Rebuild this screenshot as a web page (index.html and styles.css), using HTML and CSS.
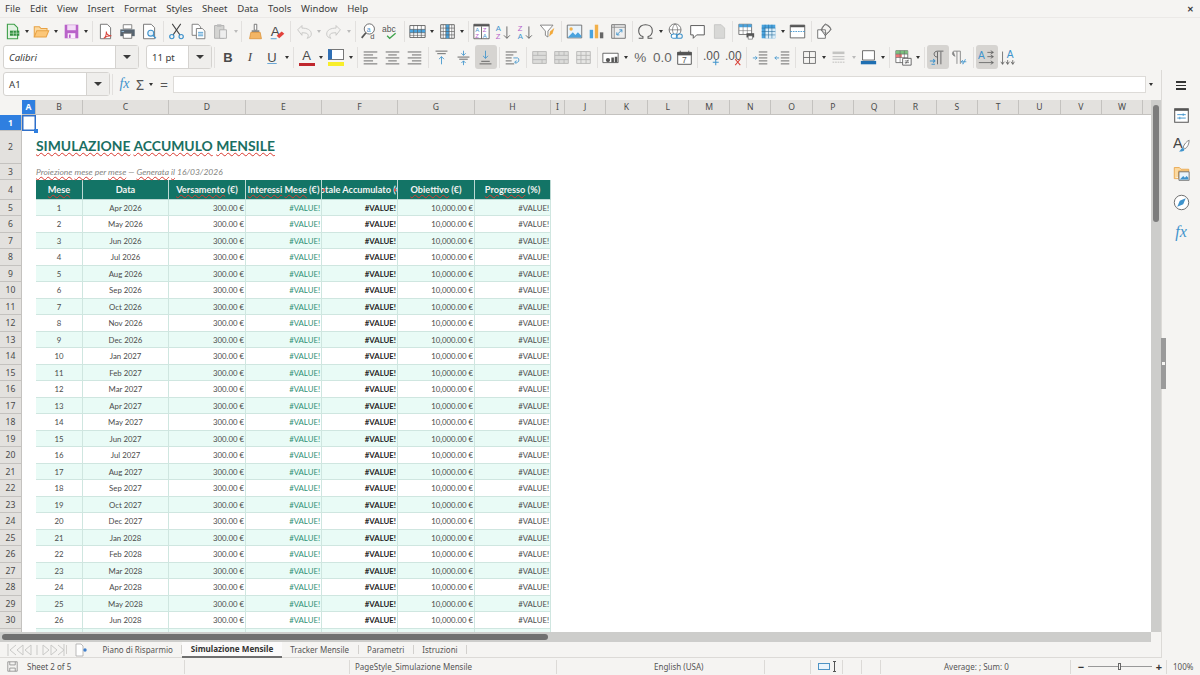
FILE: index.html
```html
<!DOCTYPE html>
<html lang="it">
<head>
    <meta charset="UTF-8">
    <title>Simulazione Mensile - Calc</title>
    <link rel="stylesheet" href="styles.css">
</head>
<body>
<svg class="defs" xmlns="http://www.w3.org/2000/svg">
    <symbol id="i-new" viewBox="0 0 20 20"><path d="M4 1.500h8l4 4v13H4z" fill="#e3f3e3" stroke="#3f9f4a" stroke-width="1.3"/><path d="M7 9h11v6H7z" fill="#2f8f3e"/><path d="M7 12h11M11 9v6M14.500 9v6" stroke="#d6efd6" stroke-width=".7"/></symbol>
    <symbol id="i-open" viewBox="0 0 20 20"><path d="M1.500 16.500v-12h6l2 2h7v3" fill="#fbd9a0" stroke="#e8a245" stroke-width="1.2"/><path d="M1.500 16.500l3-7.500h14l-3 7.500z" fill="#fcc779" stroke="#e8a245" stroke-width="1.2"/></symbol>
    <symbol id="i-save" viewBox="0 0 20 20"><path d="M2 2h16v16H2z" fill="#b963c9"/><path d="M5 2.500h10v6H5z" fill="#f3dcf7"/><path d="M5.500 12h9v6h-9z" fill="#fbeffc"/><path d="M7 13.500h2v4H7z" fill="#b963c9"/></symbol>
    <symbol id="i-pdf" viewBox="0 0 20 20"><path d="M4 1.500h8l4 4v13H4z" fill="#fff" stroke="#707070" stroke-width="1.1"/><path d="M8 18c2-1 3-5 3-8 0 3 2 5 6 5-3 0-7 1-9 3z" fill="none" stroke="#d8453c" stroke-width="1.2"/></symbol>
    <symbol id="i-print" viewBox="0 0 20 20"><path d="M5 2h10v5H5z" fill="#fff" stroke="#777"/><path d="M1.500 7.500h17v8h-17z" fill="#566470"/><path d="M5 12h10v6H5z" fill="#fff" stroke="#666"/><path d="M3 10h3" stroke="#9fc7e4"/></symbol>
    <symbol id="i-preview" viewBox="0 0 20 20"><path d="M3 1.500h9l4 4v13H3z" fill="#fff" stroke="#707070" stroke-width="1.1"/><circle cx="11.500" cy="12" r="3.500" fill="#e7f2fa" stroke="#3f93cc" stroke-width="1.300"/><path d="M14 14.500l3.500 3.500" stroke="#3f93cc" stroke-width="1.500"/></symbol>
    <symbol id="i-cut" viewBox="0 0 20 20"><path d="M5 1l9 13M15 1L6 14" stroke="#444" stroke-width="1.200" fill="none"/><circle cx="4.500" cy="16" r="2.500" fill="none" stroke="#3f93cc" stroke-width="1.400"/><circle cx="15.500" cy="16" r="2.500" fill="none" stroke="#3f93cc" stroke-width="1.400"/></symbol>
    <symbol id="i-copy" viewBox="0 0 20 20"><path d="M2.500 1.500h7l3 3v10h-10z" fill="#fff" stroke="#707070"/><path d="M7.500 6.500h7l3 3v9h-10z" fill="#fff" stroke="#707070"/><path d="M9.500 11h6M9.500 13h6M9.500 15h6" stroke="#3f93cc"/></symbol>
    <symbol id="i-paste" viewBox="0 0 20 20"><path d="M3 3h11v15H3z" fill="#d4d4d2" stroke="#aaa"/><path d="M6 1.500h5v3H6z" fill="#bbb"/><path d="M9 8h8v10H9z" fill="#eee" stroke="#aaa"/></symbol>
    <symbol id="i-clone" viewBox="0 0 20 20"><path d="M8.500 1.500h3v7h-3z" fill="#fff" stroke="#666"/><path d="M5.500 8.500h9v2.500h-9z" fill="#8a8a8a"/><path d="M4.500 11h11l1.500 7.500H3z" fill="#f3b565" stroke="#d98a2b" stroke-width=".8"/></symbol>
    <symbol id="i-clear" viewBox="0 0 20 20"><text x="2" y="15" class="gl" font-size="16" fill="#4a4a4a">A</text><path d="M9 15l6-5 3 2.500-6 5.500z" fill="#e2413b"/><path d="M2 18.500h7" stroke="#3f93cc"/></symbol>
    <symbol id="i-undo" viewBox="0 0 20 20"><path d="M2 8l5-5v3c6 0 11 2 11 7 0 3-2 4-5 5 2-2 2-5-1-6-2-.500-3-.500-5-.500v3z" fill="#f4f3f1" stroke="#c2c2c0"/></symbol>
    <symbol id="i-redo" viewBox="0 0 20 20"><path d="M18 8l-5-5v3C7 6 2 8 2 13c0 3 2 4 5 5-2-2-2-5 1-6 2-.500 3-.500 5-.500v3z" fill="#f4f3f1" stroke="#c2c2c0"/></symbol>
    <symbol id="i-find" viewBox="0 0 20 20"><circle cx="11" cy="7" r="6" fill="#fff" stroke="#666" stroke-width="1.100"/><path d="M7 11.500l-5 6" stroke="#555" stroke-width="2"/><text x="8" y="10" class="gl" font-size="8" fill="#3f93cc">a</text><text x="12" y="19" class="gl" font-size="9" fill="#555">d</text></symbol>
    <symbol id="i-spell" viewBox="0 0 20 20"><text x="0" y="10" class="gl" font-size="10" fill="#555">abc</text><path d="M6 15l3 3 7-6" fill="none" stroke="#3fa34d" stroke-width="1.500"/></symbol>
    <symbol id="i-rows" viewBox="0 0 20 20"><path d="M1 3h18v14H1z" fill="#fff" stroke="#555"/><path d="M1 7.500h18v4H1z" fill="#49a3de"/><path d="M1 7.500h18M1 11.500h18M1 14.500h18M5.500 3v14M10 3v14M14.500 3v14" stroke="#555" stroke-width=".7"/></symbol>
    <symbol id="i-cols" viewBox="0 0 20 20"><path d="M2 2h16v16H2z" fill="#fff" stroke="#555"/><path d="M8 2h4v16H8z" fill="#49a3de"/><path d="M5 2v16M8 2v16M12 2v16M15 2v16M2 6h16M2 10h16M2 14h16" stroke="#555" stroke-width=".7"/></symbol>
    <symbol id="i-sort" viewBox="0 0 20 20"><path d="M1 1.500h18v17H1z" fill="#fff" stroke="#555"/><path d="M1 1.500h18v2.500H1z" fill="#555"/><path d="M10 4v14.500" stroke="#555"/><text x="2.500" y="11" class="gl" font-size="7" fill="#3f93cc">A</text><text x="2.500" y="17.500" class="gl" font-size="7" fill="#b65fc9">Z</text><text x="11.500" y="11" class="gl" font-size="7" fill="#b65fc9">Z</text><text x="11.500" y="17.500" class="gl" font-size="7" fill="#3f93cc">A</text></symbol>
    <symbol id="i-asc" viewBox="0 0 20 20"><text x="1" y="9" class="gl" font-size="9" fill="#3f93cc">A</text><text x="1" y="19" class="gl" font-size="9" fill="#b65fc9">Z</text><path d="M14 4v14M10.500 14.500l3.500 3.500 3.500-3.500" fill="none" stroke="#666" stroke-width="1.100"/></symbol>
    <symbol id="i-desc" viewBox="0 0 20 20"><text x="1" y="9" class="gl" font-size="9" fill="#b65fc9">Z</text><text x="1" y="19" class="gl" font-size="9" fill="#3f93cc">A</text><path d="M14 4v14M10.500 14.500l3.500 3.500 3.500-3.500" fill="none" stroke="#666" stroke-width="1.100"/></symbol>
    <symbol id="i-filter" viewBox="0 0 20 20"><path d="M1.500 2.500h15l-6 7v7l-3-2v-5z" fill="#fff" stroke="#777"/><path d="M12 16l1-6 5-4-2 6z" fill="#f2a93b"/></symbol>
    <symbol id="i-image" viewBox="0 0 20 20"><path d="M1.500 2.500h17v15h-17z" fill="#eaf4fb" stroke="#666"/><circle cx="6" cy="7" r="2" fill="#f2b04a"/><path d="M2 17l6-6 3 3 3-3 4 4v2z" fill="#49a3de"/></symbol>
    <symbol id="i-chart" viewBox="0 0 20 20"><path d="M2 8h4v10H2z" fill="#49a3de"/><path d="M8 2h4v16H8z" fill="#f2b04a"/><path d="M14 11h4v7h-4z" fill="#666"/></symbol>
    <symbol id="i-pivot" viewBox="0 0 20 20"><path d="M2 2h16v16H2z" fill="#eee" stroke="#666"/><path d="M2 5h16M5 2v16" stroke="#888"/><path d="M8 14l6-6M14 11V8h-3M8 11v3h3" fill="none" stroke="#3f93cc" stroke-width="1.100"/></symbol>
    <symbol id="i-omega" viewBox="0 0 20 20"><path d="M2 18h5v-2c-3-1-5-3.500-5-7 0-4.500 3.500-7 8-7s8 2.500 8 7c0 3.500-2 6-5 7v2h5" fill="none" stroke="#555" stroke-width="1.200"/></symbol>
    <symbol id="i-link" viewBox="0 0 20 20"><circle cx="9.500" cy="8" r="7" fill="#fff" stroke="#666"/><path d="M2.500 8h14M9.500 1c-4 4-4 10 0 14M9.500 1c4 4 4 10 0 14" fill="none" stroke="#666" stroke-width=".8"/><rect x="5" y="13" width="7" height="5" rx="2.500" fill="#fff" stroke="#3f93cc" stroke-width="1.200"/><rect x="11" y="13" width="7" height="5" rx="2.500" fill="none" stroke="#3f93cc" stroke-width="1.200"/></symbol>
    <symbol id="i-note" viewBox="0 0 20 20"><path d="M2 3h16v11H9l-4 4v-4H2z" fill="#fff" stroke="#555" stroke-width="1.100"/></symbol>
    <symbol id="i-head" viewBox="0 0 20 20"><path d="M4 2h8l4 4v12H4z" fill="#d8d8d6" stroke="#c4c4c2"/></symbol>
    <symbol id="i-pgrid" viewBox="0 0 20 20"><path d="M1 1.500h15v12H1z" fill="#fff" stroke="#666"/><path d="M1 1.500h15V5H1z" fill="#49a3de"/><path d="M1 9h15M6 1.500v12M11 1.500v12" stroke="#777" stroke-width=".7"/><path d="M10 12h9v5h-9z" fill="#555"/><path d="M12 15h5v4h-5z" fill="#fff" stroke="#555" stroke-width=".7"/></symbol>
    <symbol id="i-freeze" viewBox="0 0 20 20"><path d="M2 2h16v16H2z" fill="#49a3de"/><path d="M6 6h12v12H6z" fill="#d9ecf8"/><path d="M2 6h16M2 10h16M2 14h16M6 2v16M10 2v16M14 2v16" stroke="#2a6f9e" stroke-width=".7"/></symbol>
    <symbol id="i-window" viewBox="0 0 20 20"><path d="M1.500 2.500h17v15h-17z" fill="#fff" stroke="#555"/><path d="M1.500 2.500h17V5h-17z" fill="#555"/><path d="M1.500 10h17" stroke="#3f93cc" stroke-dasharray="2 1"/></symbol>
    <symbol id="i-shapes" viewBox="0 0 20 20"><path d="M2 8h9v10H2z" fill="#fff" stroke="#666"/><path d="M11 1l7 6-7 8-5-7z" fill="none" stroke="#666"/><circle cx="12" cy="7" r="5" fill="none" stroke="#666" stroke-width=".8"/></symbol>
    <symbol id="i-al" viewBox="0 0 20 20"><path d="M2 3.500h16M2 7h11M2 10.500h16M2 14h11M2 17.500h16" stroke="#555"/></symbol>
    <symbol id="i-ac" viewBox="0 0 20 20"><path d="M2 3.500h16M5 7h10M2 10.500h16M5 14h10M2 17.500h16" stroke="#555"/></symbol>
    <symbol id="i-ar" viewBox="0 0 20 20"><path d="M2 3.500h16M7 7h11M2 10.500h16M7 14h11M2 17.500h16" stroke="#555"/></symbol>
    <symbol id="i-vt" viewBox="0 0 20 20"><path d="M3 2.500h14M5 5.500h10" stroke="#555"/><path d="M10 18V9M7 12l3-3 3 3" fill="none" stroke="#3f93cc"/></symbol>
    <symbol id="i-vc" viewBox="0 0 20 20"><path d="M3 9.500h14M5 12h10" stroke="#555"/><path d="M10 2v5.500M7.500 5L10 7.500 12.500 5M10 19v-5M7.500 16.500L10 14l2.500 2.500" fill="none" stroke="#3f93cc"/></symbol>
    <symbol id="i-vb" viewBox="0 0 20 20"><path d="M3 17.500h14M5 14.500h10" stroke="#555"/><path d="M10 2v9M7 8l3 3 3-3" fill="none" stroke="#3f93cc"/></symbol>
    <symbol id="i-wrap" viewBox="0 0 20 20"><path d="M2 3.500h13M2 7h9M2 10.500h7M2 14h7M2 17.500h10" stroke="#555"/><path d="M11 10.500h5c2 0 2 5 0 5h-3M14.500 13.500l-2 2 2 2" fill="none" stroke="#3f93cc"/></symbol>
    <symbol id="i-merge" viewBox="0 0 20 20"><path d="M2 3h16v14H2z" fill="#dcdcda" stroke="#b5b5b3"/><path d="M2 7.500h16M2 12.500h16M8 3v4.500M13 12.500V17" stroke="#b5b5b3"/></symbol>
    <symbol id="i-split" viewBox="0 0 20 20"><path d="M2 3h16v14H2z" fill="#dcdcda" stroke="#b5b5b3"/><path d="M2 7.500h16M2 12.500h16M7 3v4.500M13 3v4.500M7 12.500V17M13 12.500V17" stroke="#b5b5b3"/></symbol>
    <symbol id="i-grid3" viewBox="0 0 20 20"><path d="M2 3h16v14H2z" fill="#e6e6e4" stroke="#b5b5b3"/><path d="M2 7.500h16M2 12.500h16M7 3v14M13 3v14" stroke="#b5b5b3"/></symbol>
    <symbol id="i-cur" viewBox="0 0 20 20"><path d="M1 5h18v11H1z" fill="#fff" stroke="#555"/><circle cx="7" cy="13" r="2.500" fill="#555"/><path d="M11 10h3v6h-3zM15 9h3v7h-3z" fill="#555"/></symbol>
    <symbol id="i-date" viewBox="0 0 20 20"><path d="M2 4h16v14H2z" fill="#fff" stroke="#555" stroke-width="1.100"/><path d="M2 4h16v3H2zM5 2v3M15 2v3" fill="#555" stroke="#555"/><text x="7" y="16.500" class="nm" font-size="10" fill="#555">7</text></symbol>
    <symbol id="i-adddec" viewBox="0 0 20 20"><text x="0" y="13" class="nm" font-size="14" fill="#555">.00</text><path d="M15 12v7M11.500 15.500h7" stroke="#3f93cc" stroke-width="1.200"/></symbol>
    <symbol id="i-deldec" viewBox="0 0 20 20"><text x="0" y="13" class="nm" font-size="14" fill="#555">.00</text><path d="M12 12l6 7M18 12l-6 7" stroke="#d8453c" stroke-width="1.200"/></symbol>
    <symbol id="i-ind" viewBox="0 0 20 20"><path d="M8 3.500h10M8 7h10M8 10.500h10M8 14h10M8 17.500h10" stroke="#555"/><path d="M1 10.500h5M4 8.500l2 2-2 2" fill="none" stroke="#3f93cc"/></symbol>
    <symbol id="i-out" viewBox="0 0 20 20"><path d="M8 3.500h10M8 7h10M8 10.500h10M8 14h10M8 17.500h10" stroke="#555"/><path d="M6 10.500H1M3 8.500l-2 2 2 2" fill="none" stroke="#3f93cc"/></symbol>
    <symbol id="i-border" viewBox="0 0 20 20"><path d="M3 3h14v14H3zM10 3v14M3 10h14" fill="none" stroke="#666"/></symbol>
    <symbol id="i-bstyle" viewBox="0 0 20 20"><path d="M3 3h14v3H3z" fill="#c4c4c2"/><path d="M3 9h14M3 12h14" stroke="#b5b5b3"/><path d="M3 15.500h14" stroke="#b5b5b3" stroke-dasharray="2 1"/></symbol>
    <symbol id="i-bcolor" viewBox="0 0 20 20"><path d="M3 2h14v11H3z" fill="#fff" stroke="#555"/><path d="M1 14h18v4H1z" fill="#1f6fb2"/></symbol>
    <symbol id="i-cond" viewBox="0 0 20 20"><path d="M1 2h14v14H1z" fill="#fff" stroke="#666"/><path d="M1 2h14v4H1z" fill="#7cc07f"/><path d="M1 6h7v4H1z" fill="#e77"/><path d="M1 6h14M1 10h14M6 2v14M11 2v14" stroke="#666" stroke-width=".7"/><path d="M9 11h10v8H9z" fill="#fff" stroke="#555"/><path d="M11.500 14h5M11.500 16h5M15.500 12.500l-3 5" stroke="#555" stroke-width=".8"/></symbol>
    <symbol id="i-ltr" viewBox="0 0 20 20"><path d="M17 2.500H10c-3 0-4 2-4 3.500s1 3.500 4 3.500M10 3v15M14 3v15" fill="none" stroke="#666" stroke-width="1.100"/><path d="M1 14h6M5 12l2 2-2 2M7 18H3" fill="none" stroke="#3f93cc" stroke-width="1.200"/></symbol>
    <symbol id="i-rtl" viewBox="0 0 20 20"><path d="M3 2.500h8v15M7 2.500v15" fill="none" stroke="#888" stroke-width="1.100"/><path d="M3 2.500c-2 2-2 5 2 6" fill="#888" stroke="#888"/><path d="M18 15h-6M14 13l-2 2 2 2M17 12l-3 6" fill="none" stroke="#3f93cc"/></symbol>
    <symbol id="i-hor" viewBox="0 0 20 20"><text x="0" y="12" class="gl" font-size="12" fill="#3f93cc">A</text><path d="M11 4h7M15 2l3 2-3 2M11 9h7M15 7l3 2-3 2M1 16h17M15 14l3 2-3 2" fill="none" stroke="#555" stroke-width=".9"/></symbol>
    <symbol id="i-ver" viewBox="0 0 20 20"><text x="8" y="11" class="gl" font-size="12" fill="#3f93cc">A</text><path d="M3 3v15M1 15l2 3 2-3M9 13v5M7 15l2 3 2-3M15 13v5M13 15l2 3 2-3" fill="none" stroke="#555" stroke-width=".9"/></symbol>
    <symbol id="i-props" viewBox="0 0 20 20"><path d="M2 2h16v16H2z" fill="#fff" stroke="#555" stroke-width="1.200"/><path d="M2 2h16v2.500H2z" fill="#555"/><path d="M5 9h10M5 13h10" stroke="#3f93cc" stroke-width="1.100"/><path d="M12 7.500v3M8 11.500v3" stroke="#3f93cc"/></symbol>
    <symbol id="i-styles" viewBox="0 0 20 20"><text x="0" y="14" class="gl" font-size="17" fill="#444">A</text><path d="M19 5c-3 1-6 5-7 8l2 2c3-1 5-6 5-10z" fill="#fff" stroke="#777"/><path d="M11 14c2 0 3 1 2 3-1 1-4 1.500-6 1 2-.500 2-3 4-4z" fill="#3f93cc"/></symbol>
    <symbol id="i-gallery" viewBox="0 0 20 20"><path d="M1.500 16V3h6l2 2h9v3" fill="#fbd9a0" stroke="#e8a245"/><path d="M1.500 16h5V7h12" fill="none" stroke="#e8a245"/><path d="M7 8h12v10H7z" fill="#eaf4fb" stroke="#666"/><path d="M8 17l4-4 2 2 2-2 2 2v2z" fill="#3f93cc"/></symbol>
    <symbol id="i-nav" viewBox="0 0 20 20"><circle cx="10" cy="10" r="8.500" fill="#fff" stroke="#666" stroke-width="1.100"/><path d="M15 5l-7 3-3 7 7-3z" fill="#3f93cc"/></symbol>
    <symbol id="i-navs" viewBox="0 0 58 14"><path d="M1 1v12M9 2L3 7l6 5M16 2l-6 5 6 5zM24 2l-6 5 6 5zM30 2v10M36 2l6 5-6 5zM44 2l6 5-6 5zM51 2l6 5-6 5M57 1v12" fill="none" stroke="#c9c9c7"/></symbol>
    <symbol id="i-sheetadd" viewBox="0 0 12 14"><path d="M1 1h5l2 2v10H1z" fill="#fff" stroke="#aaa" stroke-width=".8"/><circle cx="10" cy="7" r="1.700" fill="#3f7fcc"/></symbol>
    <symbol id="i-stsave" viewBox="0 0 14 14"><path d="M1 1h12v12H1z" fill="none" stroke="#888"/><path d="M3.500 1v4h7V1M3.500 13V9h7v4" fill="none" stroke="#888"/></symbol>
</svg>

<div class="menubar">
    <span>File</span><span>Edit</span><span>View</span><span>Insert</span><span>Format</span><span>Styles</span><span>Sheet</span><span>Data</span><span>Tools</span><span>Window</span><span>Help</span>
    <span class="close">&#10005;</span>
</div>

<div class="toolbar first">
    <span class="tb"><svg><use href="#i-new"/></svg></span><span class="dd"></span>
    <span class="tb"><svg><use href="#i-open"/></svg></span><span class="dd"></span>
    <span class="tb"><svg><use href="#i-save"/></svg></span><span class="dd"></span><span class="sep"></span>
    <span class="tb"><svg><use href="#i-pdf"/></svg></span>
    <span class="tb"><svg><use href="#i-print"/></svg></span>
    <span class="tb"><svg><use href="#i-preview"/></svg></span><span class="sep"></span>
    <span class="tb"><svg><use href="#i-cut"/></svg></span>
    <span class="tb"><svg><use href="#i-copy"/></svg></span>
    <span class="tb"><svg><use href="#i-paste"/></svg></span><span class="dd off"></span><span class="sep"></span>
    <span class="tb"><svg><use href="#i-clone"/></svg></span>
    <span class="tb"><svg><use href="#i-clear"/></svg></span><span class="sep"></span>
    <span class="tb"><svg><use href="#i-undo"/></svg></span><span class="dd off"></span>
    <span class="tb"><svg><use href="#i-redo"/></svg></span><span class="dd off"></span><span class="sep"></span>
    <span class="tb"><svg><use href="#i-find"/></svg></span>
    <span class="tb"><svg><use href="#i-spell"/></svg></span><span class="sep"></span>
    <span class="tb"><svg><use href="#i-rows"/></svg></span><span class="dd"></span>
    <span class="tb"><svg><use href="#i-cols"/></svg></span><span class="dd"></span><span class="sep"></span>
    <span class="tb"><svg><use href="#i-sort"/></svg></span>
    <span class="tb"><svg><use href="#i-asc"/></svg></span>
    <span class="tb"><svg><use href="#i-desc"/></svg></span>
    <span class="tb"><svg><use href="#i-filter"/></svg></span><span class="sep"></span>
    <span class="tb"><svg><use href="#i-image"/></svg></span>
    <span class="tb"><svg><use href="#i-chart"/></svg></span>
    <span class="tb"><svg><use href="#i-pivot"/></svg></span><span class="sep"></span>
    <span class="tb"><svg><use href="#i-omega"/></svg></span><span class="dd"></span>
    <span class="tb"><svg><use href="#i-link"/></svg></span>
    <span class="tb"><svg><use href="#i-note"/></svg></span>
    <span class="tb"><svg><use href="#i-head"/></svg></span><span class="sep"></span>
    <span class="tb"><svg><use href="#i-pgrid"/></svg></span>
    <span class="tb"><svg><use href="#i-freeze"/></svg></span><span class="dd"></span>
    <span class="tb"><svg><use href="#i-window"/></svg></span><span class="sep"></span>
    <span class="tb"><svg><use href="#i-shapes"/></svg></span>
</div>

<div class="toolbar second">
    <div class="combo font"><span class="combo-text">Calibri</span><span class="combo-btn"></span></div>
    <div class="combo size"><span class="combo-text">11 pt</span><span class="combo-btn"></span></div>
    <span class="sep"></span>
    <span class="tb letter bold">B</span>
    <span class="tb letter ital">I</span>
    <span class="tb letter under">U</span><span class="dd"></span><span class="sep"></span>
    <span class="tb letter color">A</span><span class="dd"></span>
    <span class="tb highlight"></span><span class="dd"></span><span class="sep"></span>
    <span class="tb"><svg><use href="#i-al"/></svg></span>
    <span class="tb"><svg><use href="#i-ac"/></svg></span>
    <span class="tb"><svg><use href="#i-ar"/></svg></span><span class="sep"></span>
    <span class="tb"><svg><use href="#i-vt"/></svg></span>
    <span class="tb"><svg><use href="#i-vc"/></svg></span>
    <span class="tb on"><svg><use href="#i-vb"/></svg></span><span class="sep"></span>
    <span class="tb"><svg><use href="#i-wrap"/></svg></span><span class="sep"></span>
    <span class="tb"><svg><use href="#i-merge"/></svg></span>
    <span class="tb"><svg><use href="#i-split"/></svg></span>
    <span class="tb"><svg><use href="#i-grid3"/></svg></span><span class="sep"></span>
    <span class="tb"><svg><use href="#i-cur"/></svg></span><span class="dd"></span>
    <span class="tb letter pct">%</span>
    <span class="tb letter pct">0.0</span>
    <span class="tb"><svg><use href="#i-date"/></svg></span><span class="sep"></span>
    <span class="tb"><svg><use href="#i-adddec"/></svg></span>
    <span class="tb"><svg><use href="#i-deldec"/></svg></span><span class="sep"></span>
    <span class="tb"><svg><use href="#i-ind"/></svg></span>
    <span class="tb"><svg><use href="#i-out"/></svg></span><span class="sep"></span>
    <span class="tb"><svg><use href="#i-border"/></svg></span><span class="dd"></span>
    <span class="tb"><svg><use href="#i-bstyle"/></svg></span><span class="dd off"></span>
    <span class="tb"><svg><use href="#i-bcolor"/></svg></span><span class="dd"></span><span class="sep"></span>
    <span class="tb"><svg><use href="#i-cond"/></svg></span><span class="dd"></span><span class="sep"></span>
    <span class="tb on"><svg><use href="#i-ltr"/></svg></span>
    <span class="tb"><svg><use href="#i-rtl"/></svg></span><span class="sep"></span>
    <span class="tb on"><svg><use href="#i-hor"/></svg></span>
    <span class="tb"><svg><use href="#i-ver"/></svg></span>
</div>

<div class="workspace">
    <div class="main">
        <div class="formula">
            <div class="combo name"><span class="combo-text">A1</span><span class="combo-btn"></span></div>
            <span class="sep"></span>
            <span class="fx">fx</span>
            <span class="sigma">&Sigma;</span><span class="dd"></span>
            <span class="equals">=</span>
            <div class="input"></div>
            <span class="dd"></span>
        </div>
        <div class="grid-area">
            <div class="sheet">
                <table>
                    <colgroup>
                        <col class="c-hdr"><col class="c-a"><col class="c-b"><col class="c-c"><col class="c-d"><col class="c-e"><col class="c-f"><col class="c-g"><col class="c-h"><col class="c-i">
                        <col class="c-n"><col class="c-n"><col class="c-n"><col class="c-n"><col class="c-n"><col class="c-n"><col class="c-n"><col class="c-n"><col class="c-n"><col class="c-n"><col class="c-n"><col class="c-n"><col class="c-n"><col class="c-n"><col class="c-n">
                    </colgroup>
                    <thead>
                        <tr><th class="corner"></th><th class="sel">A</th><th>B</th><th>C</th><th>D</th><th>E</th><th>F</th><th>G</th><th>H</th><th>I</th><th>J</th><th>K</th><th>L</th><th>M</th><th>N</th><th>O</th><th>P</th><th>Q</th><th>R</th><th>S</th><th>T</th><th>U</th><th>V</th><th>W</th><th></th></tr>
                    </thead>
                    <tbody>
                        <tr class="r1"><th class="sel">1</th><td class="cursor"></td></tr>
                        <tr class="r2"><th>2</th><td></td><td colspan="8" class="title"><u>SIMULAZIONE</u> <u>ACCUMULO</u> <u>MENSILE</u></td></tr>
                        <tr class="r3"><th>3</th><td></td><td colspan="8" class="subtitle"><u>Proiezione</u> <u>mese</u> per <u>mese</u> — <u>Generata</u> <u>il</u> 16/03/2026</td></tr>
                        <tr class="r4"><th>4</th><td></td>
                            <td class="hd"><u>Mese</u></td><td class="hd">Data</td><td class="hd"><u>Versamento</u> (€)</td><td class="hd"><u>Interessi</u> <u>Mese</u> (€)</td>
                            <td class="hd clip"><div class="clipped"><span><u>Totale</u> <u>Accumulato</u> (€)</span></div></td>
                            <td class="hd"><u>Obiettivo</u> (€)</td><td class="hd"><u>Progresso</u> (%)</td></tr>
                        <tr><th>5</th><td></td><td>1</td><td>Apr 2026</td><td>300.00 €</td><td>#VALUE!</td><td>#VALUE!</td><td>10,000.00 €</td><td>#VALUE!</td></tr>
                        <tr><th>6</th><td></td><td>2</td><td>May 2026</td><td>300.00 €</td><td>#VALUE!</td><td>#VALUE!</td><td>10,000.00 €</td><td>#VALUE!</td></tr>
                        <tr><th>7</th><td></td><td>3</td><td>Jun 2026</td><td>300.00 €</td><td>#VALUE!</td><td>#VALUE!</td><td>10,000.00 €</td><td>#VALUE!</td></tr>
                        <tr><th>8</th><td></td><td>4</td><td>Jul 2026</td><td>300.00 €</td><td>#VALUE!</td><td>#VALUE!</td><td>10,000.00 €</td><td>#VALUE!</td></tr>
                        <tr><th>9</th><td></td><td>5</td><td>Aug 2026</td><td>300.00 €</td><td>#VALUE!</td><td>#VALUE!</td><td>10,000.00 €</td><td>#VALUE!</td></tr>
                        <tr><th>10</th><td></td><td>6</td><td>Sep 2026</td><td>300.00 €</td><td>#VALUE!</td><td>#VALUE!</td><td>10,000.00 €</td><td>#VALUE!</td></tr>
                        <tr><th>11</th><td></td><td>7</td><td>Oct 2026</td><td>300.00 €</td><td>#VALUE!</td><td>#VALUE!</td><td>10,000.00 €</td><td>#VALUE!</td></tr>
                        <tr><th>12</th><td></td><td>8</td><td>Nov 2026</td><td>300.00 €</td><td>#VALUE!</td><td>#VALUE!</td><td>10,000.00 €</td><td>#VALUE!</td></tr>
                        <tr><th>13</th><td></td><td>9</td><td>Dec 2026</td><td>300.00 €</td><td>#VALUE!</td><td>#VALUE!</td><td>10,000.00 €</td><td>#VALUE!</td></tr>
                        <tr><th>14</th><td></td><td>10</td><td>Jan 2027</td><td>300.00 €</td><td>#VALUE!</td><td>#VALUE!</td><td>10,000.00 €</td><td>#VALUE!</td></tr>
                        <tr><th>15</th><td></td><td>11</td><td>Feb 2027</td><td>300.00 €</td><td>#VALUE!</td><td>#VALUE!</td><td>10,000.00 €</td><td>#VALUE!</td></tr>
                        <tr><th>16</th><td></td><td>12</td><td>Mar 2027</td><td>300.00 €</td><td>#VALUE!</td><td>#VALUE!</td><td>10,000.00 €</td><td>#VALUE!</td></tr>
                        <tr><th>17</th><td></td><td>13</td><td>Apr 2027</td><td>300.00 €</td><td>#VALUE!</td><td>#VALUE!</td><td>10,000.00 €</td><td>#VALUE!</td></tr>
                        <tr><th>18</th><td></td><td>14</td><td>May 2027</td><td>300.00 €</td><td>#VALUE!</td><td>#VALUE!</td><td>10,000.00 €</td><td>#VALUE!</td></tr>
                        <tr><th>19</th><td></td><td>15</td><td>Jun 2027</td><td>300.00 €</td><td>#VALUE!</td><td>#VALUE!</td><td>10,000.00 €</td><td>#VALUE!</td></tr>
                        <tr><th>20</th><td></td><td>16</td><td>Jul 2027</td><td>300.00 €</td><td>#VALUE!</td><td>#VALUE!</td><td>10,000.00 €</td><td>#VALUE!</td></tr>
                        <tr><th>21</th><td></td><td>17</td><td>Aug 2027</td><td>300.00 €</td><td>#VALUE!</td><td>#VALUE!</td><td>10,000.00 €</td><td>#VALUE!</td></tr>
                        <tr><th>22</th><td></td><td>18</td><td>Sep 2027</td><td>300.00 €</td><td>#VALUE!</td><td>#VALUE!</td><td>10,000.00 €</td><td>#VALUE!</td></tr>
                        <tr><th>23</th><td></td><td>19</td><td>Oct 2027</td><td>300.00 €</td><td>#VALUE!</td><td>#VALUE!</td><td>10,000.00 €</td><td>#VALUE!</td></tr>
                        <tr><th>24</th><td></td><td>20</td><td>Dec 2027</td><td>300.00 €</td><td>#VALUE!</td><td>#VALUE!</td><td>10,000.00 €</td><td>#VALUE!</td></tr>
                        <tr><th>25</th><td></td><td>21</td><td>Jan 2028</td><td>300.00 €</td><td>#VALUE!</td><td>#VALUE!</td><td>10,000.00 €</td><td>#VALUE!</td></tr>
                        <tr><th>26</th><td></td><td>22</td><td>Feb 2028</td><td>300.00 €</td><td>#VALUE!</td><td>#VALUE!</td><td>10,000.00 €</td><td>#VALUE!</td></tr>
                        <tr><th>27</th><td></td><td>23</td><td>Mar 2028</td><td>300.00 €</td><td>#VALUE!</td><td>#VALUE!</td><td>10,000.00 €</td><td>#VALUE!</td></tr>
                        <tr><th>28</th><td></td><td>24</td><td>Apr 2028</td><td>300.00 €</td><td>#VALUE!</td><td>#VALUE!</td><td>10,000.00 €</td><td>#VALUE!</td></tr>
                        <tr><th>29</th><td></td><td>25</td><td>May 2028</td><td>300.00 €</td><td>#VALUE!</td><td>#VALUE!</td><td>10,000.00 €</td><td>#VALUE!</td></tr>
                        <tr><th>30</th><td></td><td>26</td><td>Jun 2028</td><td>300.00 €</td><td>#VALUE!</td><td>#VALUE!</td><td>10,000.00 €</td><td>#VALUE!</td></tr>
                        <tr><th></th><td></td><td></td><td></td><td></td><td></td><td></td><td></td><td></td></tr>
                    </tbody>
                </table>
            </div>
            <div class="vscroll"><div class="vthumb"></div></div>
        </div>
        <div class="hscroll"><div class="hthumb"></div></div>
        <div class="tabs">
            <svg class="tab-nav"><use href="#i-navs"/></svg>
            <span class="tab-sep first-sep"></span>
            <svg class="tab-add"><use href="#i-sheetadd"/></svg>
            <span class="tab">Piano di Risparmio</span><span class="tab-sep"></span>
            <span class="tab active">Simulazione Mensile</span>
            <span class="tab">Tracker Mensile</span><span class="tab-sep"></span>
            <span class="tab">Parametri</span><span class="tab-sep"></span>
            <span class="tab">Istruzioni</span><span class="tab-sep"></span>
        </div>
    </div>
    <div class="sidebar">
        <div class="burger"><span></span><span></span><span></span></div>
        <svg><use href="#i-props"/></svg>
        <svg><use href="#i-styles"/></svg>
        <svg><use href="#i-gallery"/></svg>
        <svg><use href="#i-nav"/></svg>
        <span class="fx side">fx</span>
        <div class="side-handle"></div>
    </div>
</div>

<div class="statusbar">
    <svg class="st-save"><use href="#i-stsave"/></svg>
    <span class="st w-sheet">Sheet 2 of 5</span>
    <span class="st w-blank1"></span>
    <span class="st w-page">PageStyle_Simulazione Mensile</span>
    <span class="st w-lang">English (USA)</span>
    <span class="st w-blank2"></span>
    <span class="st w-ins"><i class="ins-box"></i><i class="ins-cur"></i></span>
    <span class="st w-b1"></span>
    <span class="st w-b2"></span>
    <span class="st w-sum">Average: ; Sum: 0</span>
    <span class="st w-zoom"><b class="z-btn">&minus;</b><i class="z-track"><i class="z-thumb"></i></i><b class="z-btn">+</b></span>
    <span class="w-pct">100%</span>
</div>
</body>
</html>
```

FILE: styles.css
```css
* {
    box-sizing: border-box;
}
body {
    margin: 0;
    width: 1200px;
    height: 675px;
    overflow: hidden;
    display: flex;
    flex-direction: column;
    background-color: #f5f4f2;
    font-family: "Noto Sans", sans-serif;
    color: #3c3c3c;
}
.defs {
    display: none;
}
.gl {
    font-family: "Liberation Sans", sans-serif;
}
.nm {
    font-family: "Liberation Sans", sans-serif;
}

/* menu */
.menubar {
    height: 17px;
    flex: none;
    display: flex;
    align-items: center;
    gap: 9.7px;
    padding-left: 5px;
    font-size: 9.6px;
}
.close {
    margin-left: auto;
    margin-right: 6px;
    font-size: 8px;
    font-weight: bold;
}

/* toolbars */
.toolbar {
    display: flex;
    flex: none;
    align-items: center;
    border-top: 1px solid #ebe9e7;
}
.toolbar.first {
    height: 27px;
    padding-left: 1px;
}
.toolbar.second {
    height: 26px;
    padding-left: 3px;
    border-top: 0;
}
.tb {
    width: 22px;
    height: 24px;
    flex: none;
    display: flex;
    align-items: center;
    justify-content: center;
    border-radius: 3px;
}
.tb svg {
    width: 17px;
    height: 17px;
}
.tb.on {
    background-color: #d6d4d1;
}
.dd {
    width: 7.6px;
    height: 10px;
    flex: none;
    display: flex;
    align-items: center;
    justify-content: center;
}
.dd::after {
    content: "";
    border-left: 2.5px solid transparent;
    border-right: 2.5px solid transparent;
    border-top: 3px solid #333;
}
.dd.off::after {
    border-top-color: #bbb;
}
.sep {
    width: 5px;
    height: 21px;
    flex: none;
    display: flex;
    justify-content: center;
}
.sep::after {
    content: "";
    width: 1px;
    background-color: #e2e0de;
}
.letter {
    font-family: "Liberation Sans", sans-serif;
    font-size: 13px;
    color: #4a4a4a;
}
.bold {
    font-weight: bold;
}
.ital {
    font-family: "Liberation Serif", serif;
    font-style: italic;
}
.under {
    text-decoration: underline;
    text-decoration-color: #6aa7d6;
}
.color {
    position: relative;
    padding-bottom: 3px;
}
.color::after {
    content: "";
    position: absolute;
    left: 3px;
    right: 3px;
    bottom: 3px;
    height: 3px;
    background-color: #c0272d;
}
.highlight {
    position: relative;
}
.highlight::before {
    content: "";
    width: 11px;
    height: 9px;
    margin-bottom: 6px;
    background-color: #fff;
    border: 1px solid #777;
    border-left-color: #2f6fb5;
    border-left-width: 4px;
}
.highlight::after {
    content: "";
    position: absolute;
    left: 3px;
    right: 3px;
    bottom: 3px;
    height: 4px;
    background-color: #f8ee2a;
}
.pct {
    font-size: 13.5px;
    color: #666;
}

/* combo boxes */
.combo {
    display: flex;
    height: 24px;
    flex: none;
    background-color: #fff;
    border: 1px solid #d5d3d0;
    border-radius: 3px;
    font-size: 9.6px;
}
.combo-text {
    flex: 1;
    padding-left: 5px;
    display: flex;
    align-items: center;
}
.combo-btn {
    width: 23px;
    display: flex;
    align-items: center;
    justify-content: center;
    background-color: #efeeec;
    border-left: 1px solid #d5d3d0;
}
.combo-btn::after {
    content: "";
    border-left: 4px solid transparent;
    border-right: 4px solid transparent;
    border-top: 4px solid #3a3a3a;
}
.font {
    width: 136px;
    margin-right: 7px;
    font-style: italic;
}
.size {
    width: 66px;
}
.name {
    width: 107px;
}

/* workspace */
.workspace {
    flex: 1;
    display: flex;
    min-height: 0;
}
.main {
    width: 1161px;
    display: flex;
    flex-direction: column;
}
.formula {
    height: 30px;
    flex: none;
    display: flex;
    align-items: center;
    padding: 0 0 2px 3px;
}
.fx {
    font-family: "Liberation Serif", serif;
    font-style: italic;
    font-size: 14px;
    color: #3f93cc;
}
.formula .fx {
    width: 17px;
    margin-left: 1px;
    text-align: center;
}
.sigma {
    width: 14px;
    font-size: 14px;
    text-align: center;
    color: #555;
}
.equals {
    width: 15px;
    text-align: center;
    font-size: 14px;
    margin-left: 2px;
    color: #555;
}
.input {
    width: 973px;
    height: 17px;
    margin-left: 1px;
    background-color: #fff;
    border: 1px solid #dddbd8;
    margin-right: 2px;
}
.grid-area {
    height: 532px;
    flex: none;
    display: flex;
    background-color: #fff;
}
.sheet {
    width: 1151px;
    overflow: hidden;
}
table {
    table-layout: fixed;
    width: 1184.5px;
    border-collapse: separate;
    border-spacing: 0;
    font-family: Lato, sans-serif;
    font-size: 7.8px;
}
.c-hdr { width: 22px; }
.c-a { width: 14px; }
.c-b { width: 47px; }
.c-c { width: 86px; }
.c-d { width: 77px; }
.c-e { width: 76px; }
.c-f { width: 76px; }
.c-g { width: 77px; }
.c-h { width: 76px; }
.c-i { width: 14px; }
.c-n { width: 41.3px; }
th {
    padding: 0;
    font-weight: normal;
    font-family: "Noto Sans", sans-serif;
    font-size: 8.6px;
    color: #4a4a4a;
    background-color: #e3e1de;
    border-right: 1px solid #c4c2bf;
    border-bottom: 1px solid #c4c2bf;
}
thead th {
    height: 15px;
}
th.corner {
    background-color: #f5f4f2;
    border-color: #f5f4f2;
}
th.sel {
    background-color: #2f7fe0;
    color: #fff;
    font-weight: bold;
}
td {
    padding: 0 1px;
    white-space: nowrap;
    overflow: hidden;
    color: #4b4b4b;
}
tbody tr:nth-child(odd) td, tbody tr:nth-child(odd) th {
    height: 16px;
}
tbody tr:nth-child(even) td, tbody tr:nth-child(even) th {
    height: 17px;
}
tbody tr.r1 td, tbody tr.r1 th {
    height: 16px;
}
tbody tr.r2 td, tbody tr.r2 th {
    height: 33px;
}
tbody tr.r3 td, tbody tr.r3 th {
    height: 16px;
}
tbody tr.r4 td, tbody tr.r4 th {
    height: 20px;
}
tbody td:nth-child(n+3) {
    border-right: 1px solid #cfe6e0;
    border-bottom: 1px solid #cfe6e0;
    text-align: right;
}
tbody td:nth-child(3), tbody td:nth-child(4) {
    text-align: center;
}
tbody tr:nth-child(n+5):nth-child(even) td:nth-child(n+3) {
    background-color: #fff;
}
tbody tr:nth-child(n+5):nth-child(odd) td:nth-child(n+3) {
    background-color: #e9fbf6;
}
tbody td:nth-child(6) {
    color: #2f8f75;
}
tbody td:nth-child(7) {
    color: #1f1f1f;
    font-weight: bold;
}
td.cursor {
    position: relative;
    overflow: visible;
    box-shadow: inset 0 0 0 1.5px #2f6fc9;
}
td.cursor::after {
    content: "";
    position: absolute;
    right: -2px;
    bottom: -2px;
    width: 4px;
    height: 4px;
    background-color: #2f7fe0;
}
u {
    text-decoration: underline wavy #d8392f;
    text-decoration-thickness: 1px;
    text-underline-offset: 1px;
}
tbody td.title {
    border: 0;
    padding: 0 0 4px;
    overflow: visible;
    text-align: left;
    font-size: 13.9px;
    font-weight: bold;
    color: #1a6f62;
}
tbody td.subtitle {
    border: 0;
    padding: 0;
    overflow: visible;
    text-align: left;
    font-size: 8.5px;
    font-style: italic;
    color: #85857f;
}
tbody td.hd {
    background-color: #137466;
    color: #f3f3f3;
    border-right: 1px solid #bcd9d3;
    border-bottom: 1px solid #bcd9d3;
    text-align: center;
    font-size: 9.2px;
    font-weight: bold;
    padding: 0;
}
.clipped {
    display: flex;
    justify-content: center;
    overflow: hidden;
    position: relative;
}
.clipped span {
    flex: none;
}
.clipped::before, .clipped::after {
    content: "";
    position: absolute;
    top: 50%;
    margin-top: -2px;
    border-top: 2px solid transparent;
    border-bottom: 2px solid transparent;
}
.clipped::before {
    left: 0;
    border-right: 3px solid #e25a50;
}
.clipped::after {
    right: 0;
    border-left: 3px solid #e25a50;
}

/* scrollbars */
.vscroll {
    width: 10px;
    background-color: #cdcdcb;
    padding: 5px 2px 0;
}
.vthumb {
    height: 117px;
    background-color: #7c7c7c;
    border-radius: 3px;
}
.hscroll {
    height: 10px;
    flex: none;
    background-color: #cdcdcb;
    margin-right: 10px;
    padding: 2px 0 2px 2px;
}
.hthumb {
    width: 546px;
    height: 100%;
    background-color: #707070;
    border-radius: 3px;
}

/* sheet tabs */
.tabs {
    height: 16px;
    flex: none;
    display: flex;
    align-items: center;
    font-size: 8px;
    color: #555;
    border-bottom: 1px solid #dcdad7;
    padding-left: 7px;
}
.tab-nav {
    width: 58px;
    height: 14px;
}
.tab-sep {
    width: 1px;
    height: 9px;
    background-color: #d2d0cd;
}
.first-sep {
    margin-left: 1px;
}
.tab-add {
    width: 12px;
    height: 14px;
    margin: 0 7px 0 8px;
}
.tab {
    padding: 0 8.5px;
    height: 16px;
    display: flex;
    align-items: center;
}
.tab.active {
    background-color: #fbfafa;
    font-size: 8.1px;
    font-weight: bold;
    color: #333;
    border-bottom: 2px solid #6f6f6f;
}

/* sidebar */
.sidebar {
    width: 39px;
    position: relative;
    display: flex;
    flex-direction: column;
    align-items: center;
    gap: 12px;
    border-left: 1px solid #dcdad7;
    padding-top: 7px;
}
.sidebar svg {
    width: 17px;
    height: 17px;
}
.burger {
    width: 17px;
    height: 17px;
    margin-bottom: 1px;
    display: flex;
    flex-direction: column;
    justify-content: center;
    align-items: center;
    gap: 2px;
}
.burger span {
    width: 10px;
    height: 1.5px;
    background-color: #333;
}
.fx.side {
    font-size: 16px;
    line-height: 17px;
}
.side-handle {
    position: absolute;
    left: -1px;
    top: 268px;
    width: 5px;
    height: 51px;
    background-color: #9a9a9a;
}
.side-handle::after {
    content: "";
    position: absolute;
    left: 1px;
    top: 24px;
    width: 3px;
    height: 3px;
    background-color: #f5f4f2;
}

/* status bar */
.statusbar {
    height: 17px;
    flex: none;
    display: flex;
    align-items: center;
    font-size: 8px;
    color: #555;
    padding-left: 7px;
}
.st-save {
    width: 11px;
    height: 11px;
    margin-right: 9px;
}
.st {
    height: 14px;
    display: flex;
    align-items: center;
    border-right: 1px solid #dcdad7;
    flex: none;
}
.w-sheet { width: 158px; }
.w-blank1 { width: 165px; }
.w-page { width: 207px; padding-left: 5px; }
.w-lang { width: 208px; padding-left: 97px; }
.w-blank2 { width: 46px; }
.w-ins { width: 32px; padding-left: 7px; }
.w-b1 { width: 19px; }
.w-b2 { width: 19px; }
.w-sum { width: 190px; padding-left: 63px; }
.w-zoom { width: 96px; padding-left: 6px; gap: 3px; }
.w-pct { padding-left: 6px; }
.ins-box {
    width: 12px;
    height: 7px;
    border: 1px solid #4d93c4;
    background-color: #eaf4fb;
}
.ins-cur {
    width: 3px;
    height: 11px;
    margin-left: 3px;
    border: 1px solid #555;
    border-left: 0;
    border-right: 0;
    background: linear-gradient(#555, #555) center / 1px 100% no-repeat;
}
.z-btn {
    font-weight: bold;
    font-size: 11px;
    color: #333;
    width: 8px;
    text-align: center;
}
.z-track {
    position: relative;
    width: 64px;
    height: 1px;
    background-color: #999;
}
.z-thumb {
    position: absolute;
    left: 30px;
    top: -3px;
    width: 3px;
    height: 7px;
    background-color: #f5f4f2;
    border: 1px solid #666;
}
```
